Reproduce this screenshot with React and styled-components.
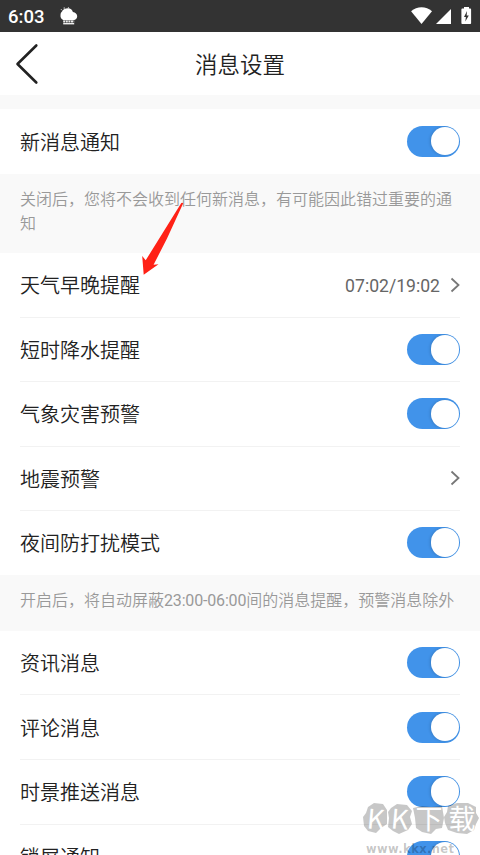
import React from 'react'
import styled, { createGlobalStyle } from 'styled-components'

const GlobalStyle = createGlobalStyle`
  * {
    box-sizing: border-box;
  }
  body {
    margin: 0;
    background: #fff;
    font-family: Roboto, 'Noto Sans CJK SC', sans-serif;
    overflow: hidden;
  }
`

const Screen = styled.div`
  position: relative;
  width: 480px;
  height: 855px;
  overflow: hidden;
  background: #f9f9f9;
`

const StatusBar = styled.div`
  display: flex;
  align-items: center;
  height: 32px;
  padding: 0 8px;
  background: #333;
  color: #fff;
`

const Clock = styled.span`
  width: 52px;
  padding-top: 2px;
  font-size: 18.5px;
  font-weight: 500;
  line-height: 30px;
`

const StatusIcons = styled.svg`
  margin-left: auto;
`

const Header = styled.header`
  display: grid;
  grid-template-columns: 60px 1fr 60px;
  align-items: center;
  height: 63px;
  background: #fff;
`

const Title = styled.h1`
  margin: 0;
  padding-top: 2px;
  color: #222;
  font-size: 22.5px;
  font-weight: 350;
  line-height: 32px;
  text-align: center;
`

const Group = styled.section`
  margin-top: ${({ $gap }) => $gap || 0}px;
  padding: 0 20px;
  background: #fff;
`

const Row = styled.div`
  display: flex;
  align-items: center;
  height: ${({ $height }) => $height || 64.5}px;
  border-bottom: 1px solid #f2f2f2;

  &:last-child {
    border-bottom-color: transparent;
  }
`

const Label = styled.span`
  flex: 1;
  padding-top: 3px;
  color: #222;
  font-size: 20px;
  font-weight: 350;
  line-height: 30px;
`

const Value = styled.span`
  margin-right: 10px;
  padding-top: 2px;
  color: #666;
  font-size: 17.6px;
  line-height: 30px;
`

const Note = styled.p`
  height: ${({ $height }) => $height}px;
  margin: 0;
  padding: 13.5px 20px 0;
  color: #999;
  font-size: 16px;
  font-weight: 350;
  line-height: 24px;
`

const Hours = styled.span`
  font-weight: 400;
  letter-spacing: -0.17px;
`

const Track = styled.span`
  display: flex;
  justify-content: flex-end;
  align-items: center;
  width: 53.5px;
  height: 31px;
  padding: 1px;
  border-radius: 16px;
  background: #4193ea;
  overflow: hidden;
`

const Knob = styled.span`
  width: 28.5px;
  height: 28.5px;
  border-radius: 50%;
  background: #fff;
  box-shadow: -1px 0 3px rgba(0, 0, 0, 0.15);
`

const Pointer = styled.svg`
  position: absolute;
  left: 138px;
  top: 200px;
`

const Watermark = styled.div`
  position: absolute;
  left: 362px;
  top: 800px;
  width: 118px;
  height: 55px;
`

const Blobs = styled.svg`
  position: absolute;
  left: 0;
  top: 0;
`

const Brand = styled.div`
  position: absolute;
  left: 2px;
  top: 1px;
  display: grid;
  grid-template-columns: 24px 24px 34px 32px;
  color: #fff;
  font-family: 'Noto Sans CJK SC', sans-serif;
  font-size: 27px;
  font-weight: 400;
  line-height: 34px;
  text-align: center;
`

const Letter = styled.span`
  transform: rotate(5deg);
`

const Site = styled.div`
  position: absolute;
  left: 4px;
  top: 42px;
  color: rgba(0, 0, 0, 0.23);
  font-family: 'DejaVu Sans', sans-serif;
  font-size: 11.5px;
  font-weight: 700;
  letter-spacing: 0.4px;
  line-height: 14px;
`

const Toggle = () => (
  <Track>
    <Knob />
  </Track>
)

const Chevron = () => (
  <svg width="10" height="16" viewBox="0 0 10 16" fill="none" stroke="#777" strokeWidth="1.8">
    <path d="M1.5 1.5 8.5 8l-7 6.5" />
  </svg>
)

const Weather = () => (
  <svg width="18" height="18" viewBox="0 0 18 18" fill="#fff">
    <path d="M3.5 13.2C1.4 12.2.2 10.500.5 8.200.5 6.500 1 5.300 2 4.500 3.200 2.500 5.200 1.300 8 1.300c2.500 0 4.300 1.500 4.900 3.600 2.500.4 4.300 2 4.300 4.300 0 2-1.600 3.800-3.600 4z" />
    <path d="M4.2.2v2M8.4 0v1.500M.8 2l1.400 1.400" stroke="#ddd" strokeWidth=".8" />
    <path d="M3.2 14.500h11" stroke="#eee" strokeWidth="1.8" strokeDasharray="2 .6" />
    <path d="M3.2 16.700h11" stroke="#eee" strokeWidth="1.4" />
  </svg>
)

const entries = [
  { label: '天气早晚提醒', value: '07:02/19:02', link: true },
  { label: '短时降水提醒' },
  { label: '气象灾害预警' },
  { label: '地震预警', link: true },
  { label: '夜间防打扰模式', height: 64 },
]

const App = () => (
  <Screen>
    <GlobalStyle />
    <StatusBar>
      <Clock>6:03</Clock>
      <Weather />
      <StatusIcons width="62" height="20" viewBox="0 0 62 20" fill="#fff">
        <path d="M1.1 5.200C7-.1 16.100-.1 22 5.200L11.500 18z" />
        <path d="M26 18 41 3v15z" />
        <path d="M52.500 2.500h1.500V1h5v1.500h1c.7 0 1.100.4 1.100 1.100v13.300c0 .7-.4 1.100-1.100 1.100h-7.500c-.7 0-1.100-.4-1.100-1.100V3.600c0-.7.4-1.100 1.100-1.100z" />
        <path d="m57 5-3 6h1.900l-.6 4.500 3.500-6h-2.100z" fill="#333" />
      </StatusIcons>
    </StatusBar>
    <Header>
      <svg width="44" height="44" viewBox="0 0 44 44" fill="none" stroke="#222" strokeWidth="2.6" strokeLinecap="round">
        <path d="M36.300 3.500 17.500 22l18.800 18.500" strokeLinejoin="round" />
      </svg>
      <Title>消息设置</Title>
    </Header>
    <Group $gap={14}>
      <Row $height={65}>
        <Label>新消息通知</Label>
        <Toggle />
      </Row>
    </Group>
    <Note $height={79}>关闭后，您将不会收到任何新消息，有可能因此错过重要的通知</Note>
    <Group>
      {entries.map(({ label, value, link, height }) => (
        <Row key={label} $height={height}>
          <Label>{label}</Label>
          {value && <Value>{value}</Value>}
          {link ? <Chevron /> : <Toggle />}
        </Row>
      ))}
    </Group>
    <Note $height={55.5}>
      开启后，将自动屏蔽<Hours>23:00-06:00</Hours>间的消息提醒，预警消息除外
    </Note>
    <Group>
      {['资讯消息', '评论消息', '时景推送消息', '锁屏通知'].map((label) => (
        <Row key={label} $height={64.7}>
          <Label>{label}</Label>
          <Toggle />
        </Row>
      ))}
    </Group>
    <Pointer width="50" height="78" viewBox="0 0 50 78" fill="#ff2116">
      <path d="M43.300 3Q44.400 2.200 45.200 3.300L29 38.500 15.600 64.700 20.500 64.300 5.700 74.800 4.200 56 7.700 60.300z" />
    </Pointer>
    <Watermark>
      <Blobs width="118" height="36" viewBox="0 0 118 36" fill="#000" fillOpacity=".22">
        <path d="m6 7 6-4 9 1 4 6v14l-6 4-5 5-8-2-4-5-1-9 3-4z" />
        <path d="m29 8 6-4 10 1 5 6-2 6 2 7-4 6-9 4-6-3-5-4 1-9-1-6z" />
        <path d="m51 8 9-2 9 1 11-1 2 12-2 10-6 1-5 5-9-2-6-4-1-10z" />
        <path d="m86 6 9-3h11l8 4v6l3 5-3 6-2 6-7 4-10-1-9-3-3-7-1-6 3-5z" />
      </Blobs>
      <Brand>
        <Letter>K</Letter>
        <Letter>K</Letter>
        <span>下</span>
        <span>载</span>
      </Brand>
      <Site>www.kkx.net</Site>
    </Watermark>
  </Screen>
)

export default App
